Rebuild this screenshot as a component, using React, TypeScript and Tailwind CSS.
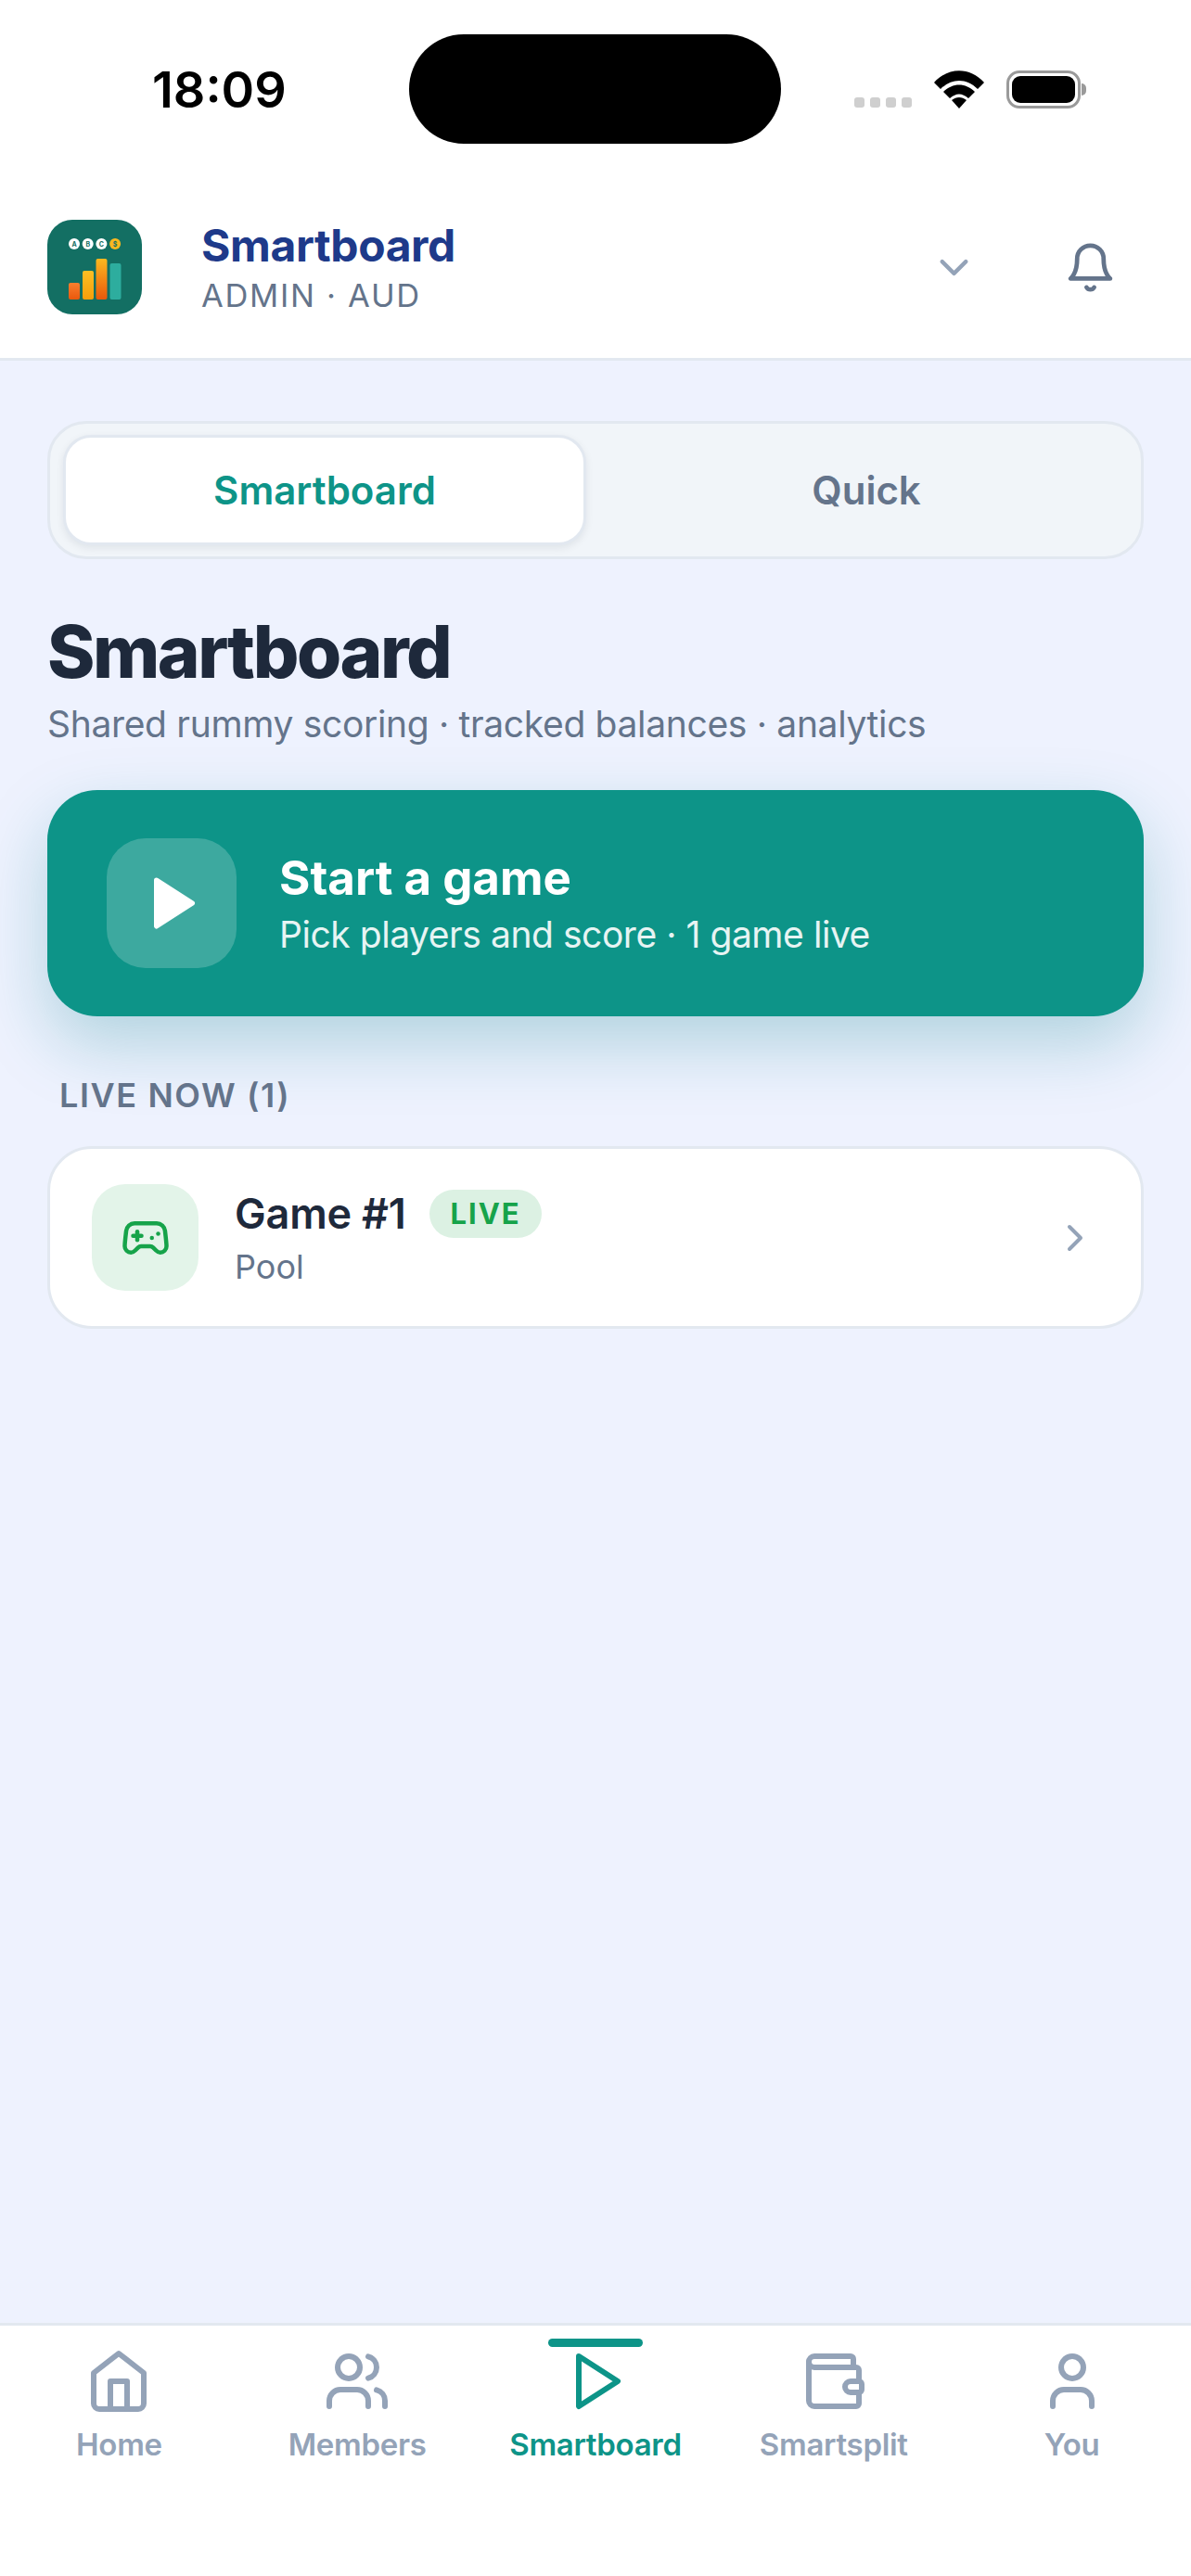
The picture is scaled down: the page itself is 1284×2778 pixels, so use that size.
import { ChevronDown, ChevronRight, Gamepad2, User, Users, Wallet } from "lucide-react";

function PlayIcon({ className, filled }: { className: string; filled?: boolean }) {
  return (
    <svg className={className} viewBox="0 0 24 24" fill={filled ? "currentColor" : "none"} stroke="currentColor" strokeWidth="2" strokeLinecap="round" strokeLinejoin="round">
      <polygon points="5 3 19 12 5 21 5 3" />
    </svg>
  );
}

function HomeIcon({ className }: { className: string }) {
  return (
    <svg className={className} viewBox="0 0 24 24" fill="none" stroke="currentColor" strokeWidth="2" strokeLinecap="round" strokeLinejoin="round">
      <path d="M3 9l9-7 9 7v11a2 2 0 0 1-2 2H5a2 2 0 0 1-2-2z" />
      <polyline points="9 22 9 12 15 12 15 22" />
    </svg>
  );
}

function BellIcon({ className }: { className: string }) {
  return (
    <svg className={className} viewBox="0 0 24 24" fill="none" stroke="currentColor" strokeWidth="2" strokeLinecap="round" strokeLinejoin="round">
      <path d="M18 8A6 6 0 0 0 6 8c0 7-3 9-3 9h18s-3-2-3-9" />
      <path d="M13.73 21a2 2 0 0 1-3.46 0" />
    </svg>
  );
}

function Logo() {
  return (
    <svg className="h-[102px] w-[102px] shrink-0" viewBox="0 0 102 102">
      <defs>
        <linearGradient id="barOrange" x1="0" y1="0" x2="0" y2="1">
          <stop offset="0" stopColor="#f97f2e" />
          <stop offset="1" stopColor="#ea580c" />
        </linearGradient>
        <linearGradient id="barAmber" x1="0" y1="0" x2="0" y2="1">
          <stop offset="0" stopColor="#fbbf24" />
          <stop offset="1" stopColor="#f59e0b" />
        </linearGradient>
        <linearGradient id="barMix" x1="0" y1="0" x2="0" y2="1">
          <stop offset="0" stopColor="#fbb81f" />
          <stop offset="1" stopColor="#ea580c" />
        </linearGradient>
      </defs>
      <rect width="102" height="102" rx="27" fill="#136f63" />
      {["A", "B", "C", "$"].map((letter, i) => (
        <g key={letter}>
          <circle cx={29 + i * 14.7} cy="26" r="6" fill={letter === "$" ? "#fbb81f" : "#ffffff"} />
          <text x={29 + i * 14.7} y="28.5" textAnchor="middle" fontSize="7" fontWeight="700" fontFamily="Inter, sans-serif" fill="#136f63">
            {letter}
          </text>
        </g>
      ))}
      <rect x="23" y="68" width="12" height="18" rx="2" fill="url(#barOrange)" />
      <rect x="38" y="55" width="12" height="31" rx="2" fill="url(#barAmber)" />
      <rect x="52.5" y="42" width="12" height="44" rx="2" fill="url(#barMix)" />
      <rect x="67.5" y="47" width="12" height="39" rx="2" fill="#2dad9e" />
    </svg>
  );
}

function StatusBar() {
  return (
    <div className="flex h-[190px] items-start bg-white">
      <div className="mt-[64px] w-[441px] pl-[164px] text-[54px] leading-[66px] font-semibold text-black">18:09</div>
      <div className="mt-[37px] h-[118px] w-[401px] rounded-[59px] bg-black" />
      <div className="mt-[76px] ml-[79px] flex items-start">
        <div className="mt-[29px] flex gap-[6px]">
          <div className="h-[11px] w-[11px] rounded-[3px] bg-[#cfcfcf]" />
          <div className="h-[11px] w-[11px] rounded-[3px] bg-[#cfcfcf]" />
          <div className="h-[11px] w-[11px] rounded-[3px] bg-[#cfcfcf]" />
          <div className="h-[11px] w-[11px] rounded-[3px] bg-[#cfcfcf]" />
        </div>
        <svg className="ml-[24px] h-[41px] w-[54px]" viewBox="0 0 54 41">
          <path d="M0 13 C15 -4 39 -4 54 13 L47 20 C35 8 19 8 7 20 Z" fill="#000" />
          <path d="M10 23 C20 13 34 13 44 23 L37 30 C30 24 24 24 17 30 Z" fill="#000" />
          <path d="M19 32 C24 28 30 28 35 32 L27 41 Z" fill="#000" />
        </svg>
        <div className="ml-[24px] flex items-center">
          <div className="flex h-[41px] w-[80px] items-center justify-center rounded-[14px] border-[3px] border-[#9a9a9a]">
            <div className="h-[29px] w-[68px] rounded-[9px] bg-black" />
          </div>
          <div className="ml-[1px] h-[13px] w-[5px] rounded-r-full bg-[#9a9a9a]" />
        </div>
      </div>
    </div>
  );
}

function Header() {
  return (
    <div className="flex h-[199px] items-center border-b-[3px] border-[#e2e8f0] bg-white pr-[80px] pl-[51px]">
      <Logo />
      <div className="ml-[64px] flex-1">
        <div className="text-[48px] leading-[56px] font-bold tracking-[-0.4px] text-[#1e3a8a]">Smartboard</div>
        <div className="mt-[5px] text-[34.5px] leading-[42px] tracking-[1.7px] text-[#64748b]">ADMIN · AUD</div>
      </div>
      <ChevronDown className="mr-[93px] h-[51px] w-[51px] text-[#94a3b8]" strokeWidth={2} />
      <BellIcon className="h-[57px] w-[57px] text-[#64748b]" />
    </div>
  );
}

function Tabs() {
  return (
    <div className="flex h-[149px] rounded-[42px] border-[3px] border-[#e2e8f0] bg-[#f1f5f9] py-[12px] pr-[12px] pl-[14px]">
      <div className="flex w-[564px] items-center justify-center rounded-[30px] border-[3px] border-[#e2e8f0] bg-white text-[42px] font-semibold text-[#0d9488] shadow-[0_3px_9px_rgba(15,23,42,0.08)]">
        Smartboard
      </div>
      <div className="flex flex-1 items-center justify-center pl-[18px] text-[42px] font-semibold text-[#64748b]">Quick</div>
    </div>
  );
}

function StartCard() {
  return (
    <div className="mt-[46px] flex h-[244px] items-center rounded-[54px] bg-[#0d9488] pl-[64px] shadow-[0_30px_72px_rgba(13,130,140,0.27)]">
      <div className="flex h-[140px] w-[140px] items-center justify-center rounded-[42px] bg-white/20">
        <PlayIcon className="ml-[6px] h-[66px] w-[66px] text-white" filled />
      </div>
      <div className="ml-[46px]">
        <div className="text-[51px] leading-[62px] font-bold text-white">Start a game</div>
        <div className="mt-[6px] text-[39px] leading-[48px] tracking-[-0.45px] text-white/90">Pick players and score · 1 game live</div>
      </div>
    </div>
  );
}

function LiveRow() {
  return (
    <div className="mt-[32px] flex h-[197px] items-center rounded-[48px] border-[3px] border-[#e2e8f0] bg-white pr-[47px] pl-[45px]">
      <div className="flex h-[115px] w-[115px] items-center justify-center rounded-[36px] bg-[#e3f4e9]">
        <Gamepad2 className="h-[54px] w-[54px] text-[#16a34a]" strokeWidth={2} />
      </div>
      <div className="ml-[39px] flex-1">
        <div className="flex items-center">
          <span className="text-[45px] leading-[56px] font-semibold tracking-[-0.2px] text-[#1e293b]">Game #1</span>
          <span className="ml-[25px] rounded-full bg-[#dcf1e3] px-[23px] py-[6px] text-[31px] leading-[40px] font-bold tracking-[1.9px] text-[#16a34a]">LIVE</span>
        </div>
        <div className="mt-[7px] text-[36px] leading-[44px] text-[#64748b]">Pool</div>
      </div>
      <ChevronRight className="h-[48px] w-[48px] text-[#94a3b8]" strokeWidth={2} />
    </div>
  );
}

function TabItem({ label, icon, active }: { label: string; icon: React.ReactNode; active?: boolean }) {
  return (
    <div className={`relative flex flex-col items-center pt-[24px] ${active ? "text-[#0d9488]" : "text-[#94a3b8]"}`}>
      {active && <div className="absolute top-[14px] h-[9px] w-[102px] rounded-full bg-[#0d9488]" />}
      {icon}
      <div className="mt-[11px] text-[33px] leading-[42px] font-semibold tracking-[-0.3px]">{label}</div>
    </div>
  );
}

function BottomNav() {
  return (
    <div className="grid h-[273px] grid-cols-5 border-t-[3px] border-[#e2e8f0] bg-white">
      <TabItem label="Home" icon={<HomeIcon className="h-[72px] w-[72px]" />} />
      <TabItem label="Members" icon={<Users className="h-[72px] w-[72px]" strokeWidth={2} />} />
      <TabItem label="Smartboard" active icon={<PlayIcon className="ml-[6px] h-[72px] w-[72px]" />} />
      <TabItem label="Smartsplit" icon={<Wallet className="h-[72px] w-[72px]" strokeWidth={2} />} />
      <TabItem label="You" icon={<User className="h-[72px] w-[72px]" strokeWidth={2} />} />
    </div>
  );
}

export default function App() {
  return (
    <div className="flex h-[2778px] w-[1284px] flex-col overflow-hidden bg-[#eef2fe] font-['Inter',sans-serif]">
      <StatusBar />
      <Header />
      <main className="flex-1 px-[51px] pt-[65px]">
        <Tabs />
        <h1 className="mt-[56px] text-[78px] leading-[88px] font-extrabold tracking-[-2.5px] text-[#1e293b]">Smartboard</h1>
        <p className="mt-[9px] text-[39px] leading-[50px] tracking-[-0.33px] text-[#64748b]">Shared rummy scoring · tracked balances · analytics</p>
        <StartCard />
        <div className="mt-[62px] pl-[13px] text-[36px] leading-[46px] font-semibold tracking-[1.6px] text-[#64748b]">LIVE NOW (1)</div>
        <LiveRow />
      </main>
      <BottomNav />
    </div>
  );
}
